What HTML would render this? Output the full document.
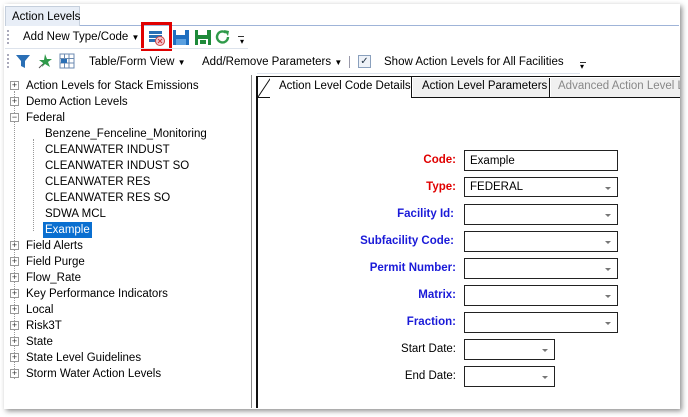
<!DOCTYPE html>
<html><head><style>
*{box-sizing:border-box;margin:0;padding:0}
body{width:688px;height:417px;background:#fff;font-family:"Liberation Sans",Tahoma,sans-serif;font-size:11.5px;color:#000;position:relative;overflow:hidden}
.win{position:absolute;left:4px;top:4px;width:676px;height:405px;background:#fff;box-shadow:2px 2px 5px rgba(0,0,0,.45)}
.a{position:absolute;white-space:nowrap}
.tree div{position:absolute;white-space:nowrap;height:16px;line-height:16px}
.pl{position:absolute;width:9px;height:9px;border:1px solid #999;background:#fff;font-size:9px;line-height:7px;text-align:center;color:#333}
.lbl{position:absolute;text-align:right;font-weight:bold;width:150px;left:306px;font-size:11.5px}
.box{position:absolute;left:464px;width:154px;height:21px;border:1px solid #222;background:#fff;padding-left:5px;line-height:19px;font-size:11.5px}
.dd::after{content:"";position:absolute;right:6px;top:9px;border-left:3px solid transparent;border-right:3px solid transparent;border-top:3px solid #777}
</style></head><body>
<div class="win"></div>
<div class="a" style="left:5px;top:6px;width:75px;height:20px;background:#e8eef7;border:1px solid #c5cfdc;border-bottom:none;padding:4px 0 0 6px">Action Levels</div>
<div class="a" style="left:80px;top:25px;width:599px;height:1px;background:#9fb4d8"></div>
<div class="a" style="left:7px;top:30px;width:2px;height:14px;border-left:2px dotted #aab"></div>
<div class="a" style="left:23px;top:31px">Add New Type/Code <span style="font-size:8px">▼</span></div>
<div class="a" style="left:141px;top:22px;width:31px;height:29px;border:3px solid #e00000"></div>
<svg class="a" style="left:148px;top:29px" width="18" height="17"><rect x="1" y="2" width="13" height="3" fill="#2a6fb5"/><rect x="1" y="6" width="13" height="3" fill="#2a6fb5"/><rect x="1" y="10" width="8" height="3" fill="#2a6fb5"/><circle cx="12" cy="12" r="4.5" fill="#f4c9d2" stroke="#c44" stroke-width="1"/><path d="M10 10l4 4M14 10l-4 4" stroke="#c33" stroke-width="1"/></svg>
<svg class="a" style="left:172px;top:29px" width="18" height="17"><rect x="1" y="1" width="16" height="15" fill="#1f6fc0"/><rect x="4" y="1" width="9" height="5" fill="#fff"/><rect x="4" y="10" width="10" height="6" fill="#5aa0e0"/></svg>
<svg class="a" style="left:194px;top:29px" width="18" height="17"><rect x="1" y="1" width="16" height="15" fill="#1e8a3a"/><rect x="4" y="1" width="9" height="5" fill="#fff"/><rect x="4" y="10" width="10" height="6" fill="#fff"/><rect x="6" y="11" width="6" height="4" fill="#1e8a3a"/></svg>
<svg class="a" style="left:214px;top:28px" width="18" height="18"><path d="M14 9a5.5 5.5 0 1 1-2-4.3" fill="none" stroke="#2f9a4a" stroke-width="2.4"/><path d="M10 2l5 1-1 5z" fill="#2f9a4a"/></svg>
<div class="a" style="left:240px;top:37px;font-size:8px">▾</div>
<div class="a" style="left:238px;top:36px;width:6px;height:1px;background:#333"></div>
<div class="a" style="left:5px;top:48px;width:243px;height:1px;background:#dde3ec"></div>
<div class="a" style="left:7px;top:54px;width:2px;height:14px;border-left:2px dotted #aab"></div>
<svg class="a" style="left:15px;top:53px" width="16" height="16"><path d="M1 2h14l-5 6v7l-4-2v-5z" fill="#2a6fb5"/></svg>
<svg class="a" style="left:37px;top:53px" width="16" height="16"><path d="M8 1l2 5 5 0-4 3 2 5-5-3-3 3 1-4-4-3 5 0z" fill="#2f9a4a"/><path d="M2 15l4-4" stroke="#555"/></svg>
<svg class="a" style="left:59px;top:53px" width="16" height="16"><rect x="1" y="1" width="14" height="14" fill="#fff" stroke="#6b8ab0"/><path d="M1 5.5h14M1 10h14M5.5 1v14M10 1v14" stroke="#6b8ab0"/><rect x="2" y="6" width="6" height="4" fill="#2a6fb5"/></svg>
<div class="a" style="left:89px;top:56px">Table/Form View <span style="font-size:8px">▼</span></div>
<div class="a" style="left:202px;top:56px">Add/Remove Parameters <span style="font-size:8px">▼</span></div>
<div class="a" style="left:349px;top:56px;width:1px;height:12px;background:#99a"></div>
<div class="a" style="left:358px;top:55px;width:13px;height:13px;border:1px solid #8aa0bd;background:#eef2f8;font-size:10px;line-height:11px;text-align:center;color:#234">✓</div>
<div class="a" style="left:384px;top:56px">Show Action Levels for All Facilities</div>
<div class="a" style="left:580px;top:62px;width:6px;height:1px;background:#333"></div>
<div class="a" style="left:580px;top:62px;font-size:8px">▾</div>
<div class="a" style="left:257px;top:73px;width:323px;height:1px;background:#dde3ec"></div>
<div class="a" style="left:5px;top:75px;width:247px;height:333px;border-right:1px solid #888"></div>
<div class="a" style="left:14px;top:91px;width:1px;height:288px;border-left:1px dotted #999"></div>
<div class="a" style="left:33px;top:139px;width:1px;height:92px;border-left:1px dotted #999"></div>
<div class="tree">
<div style="left:26px;top:78px">Action Levels for Stack Emissions</div>
<div style="left:26px;top:94px">Demo Action Levels</div>
<div style="left:26px;top:110px">Federal</div>
<div style="left:45px;top:126px">Benzene_Fenceline_Monitoring</div>
<div style="left:45px;top:142px">CLEANWATER INDUST</div>
<div style="left:45px;top:158px">CLEANWATER INDUST SO</div>
<div style="left:45px;top:174px">CLEANWATER RES</div>
<div style="left:45px;top:190px">CLEANWATER RES SO</div>
<div style="left:45px;top:206px">SDWA MCL</div>
<div style="left:43px;top:222px;background:#0a6fd0;color:#fff;padding:0 2px">Example</div>
<div style="left:26px;top:238px">Field Alerts</div>
<div style="left:26px;top:254px">Field Purge</div>
<div style="left:26px;top:270px">Flow_Rate</div>
<div style="left:26px;top:286px">Key Performance Indicators</div>
<div style="left:26px;top:302px">Local</div>
<div style="left:26px;top:318px">Risk3T</div>
<div style="left:26px;top:334px">State</div>
<div style="left:26px;top:350px">State Level Guidelines</div>
<div style="left:26px;top:366px">Storm Water Action Levels</div>
</div>
<div class="pl" style="left:10px;top:81px">+</div>
<div class="pl" style="left:10px;top:97px">+</div>
<div class="pl" style="left:10px;top:113px">−</div>
<div class="pl" style="left:10px;top:241px">+</div>
<div class="pl" style="left:10px;top:257px">+</div>
<div class="pl" style="left:10px;top:273px">+</div>
<div class="pl" style="left:10px;top:289px">+</div>
<div class="pl" style="left:10px;top:305px">+</div>
<div class="pl" style="left:10px;top:321px">+</div>
<div class="pl" style="left:10px;top:337px">+</div>
<div class="pl" style="left:10px;top:353px">+</div>
<div class="pl" style="left:10px;top:369px">+</div>
<div class="a" style="left:256px;top:76px;width:2px;height:332px;background:#111"></div>
<div class="a" style="left:256px;top:76px;width:424px;height:1px;background:#111"></div>
<div class="a" style="left:258px;top:97px;width:422px;height:1px;background:#111"></div>
<svg class="a" style="left:258px;top:77px" width="20" height="21"><path d="M0 20L12 2h8" fill="none" stroke="#111"/></svg>
<div class="a" style="left:270px;top:77px;width:142px;height:21px;background:#fff;border-right:1px solid #111;padding:3px 0 0 9px">Action Level Code Details</div>
<div class="a" style="left:413px;top:78px;width:137px;height:19px;background:#f0f0f0;border-right:1px solid #111;padding:2px 0 0 9px">Action Level Parameters</div>
<div class="a" style="left:551px;top:78px;width:129px;height:19px;background:#f0f0f0;padding:2px 0 0 7px;color:#888;overflow:hidden">Advanced Action Level L</div>
<div class="a" style="left:258px;top:98px;width:421px;height:1px;background:#fff"></div>
<div class="lbl" style="top:154px;color:#e00000">Code:</div>
<div class="lbl" style="top:181px;color:#e00000">Type:</div>
<div class="lbl" style="top:208px;color:#1a1ad8;left:304px">Facility Id:</div>
<div class="lbl" style="top:235px;color:#1a1ad8;left:304px">Subfacility Code:</div>
<div class="lbl" style="top:262px;color:#1a1ad8">Permit Number:</div>
<div class="lbl" style="top:289px;color:#1a1ad8">Matrix:</div>
<div class="lbl" style="top:316px;color:#1a1ad8">Fraction:</div>
<div class="lbl" style="top:343px;font-weight:normal">Start Date:</div>
<div class="lbl" style="top:370px;font-weight:normal">End Date:</div>
<div class="box" style="top:150px;line-height:20px">Example</div>
<div class="box dd" style="top:177px;height:20px;line-height:19px">FEDERAL</div>
<div class="box dd" style="top:204px"></div>
<div class="box dd" style="top:231px"></div>
<div class="box dd" style="top:258px"></div>
<div class="box dd" style="top:285px"></div>
<div class="box dd" style="top:312px"></div>
<div class="box dd" style="top:339px;width:91px"></div>
<div class="box dd" style="top:366px;width:91px"></div>
</body></html>
